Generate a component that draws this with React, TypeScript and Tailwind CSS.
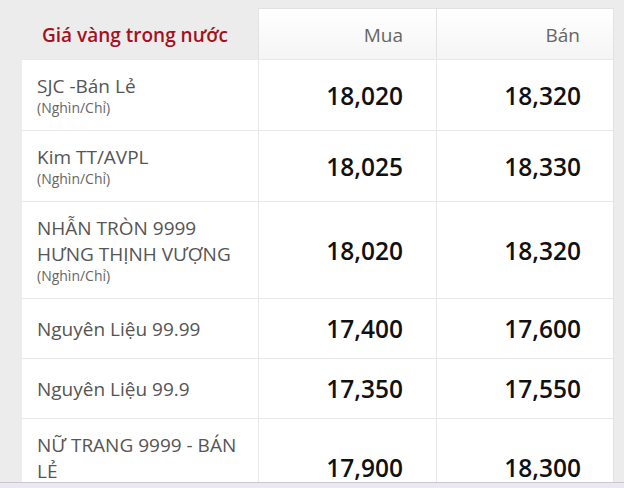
import React from "react";

type Row = { name: string[]; sub?: boolean; buy: string; sell: string };

const rows: Row[] = [
  { name: ["SJC -Bán Lẻ"], sub: true, buy: "18,020", sell: "18,320" },
  { name: ["Kim TT/AVPL"], sub: true, buy: "18,025", sell: "18,330" },
  { name: ["NHẪN TRÒN 9999", "HƯNG THỊNH VƯỢNG"], sub: true, buy: "18,020", sell: "18,320" },
  { name: ["Nguyên Liệu 99.99"], buy: "17,400", sell: "17,600" },
  { name: ["Nguyên Liệu 99.9"], buy: "17,350", sell: "17,550" },
  { name: ["NỮ TRANG 9999 - BÁN", "LẺ"], sub: true, buy: "17,900", sell: "18,300" },
];

export default function App() {
  return (
    <div
      className="relative w-[624px] h-[488px] overflow-hidden bg-[#ececec]"
      style={{ fontFamily: '"Open Sans", "Noto Sans", sans-serif' }}
    >
      <div className="ml-[22px] pt-[8px] w-[592px]">
        {/* header */}
        <div className="grid grid-cols-[236px_178px_178px] h-[51px]">
          <div className="flex items-center pl-[20px] pt-[3px] text-[19px] font-semibold text-[#a3111f]">
            Giá vàng trong nước
          </div>
          <div className="flex items-center justify-end pr-[33px] pt-[3px] text-[19px] text-[#666] bg-gradient-to-b from-white to-[#f5f5f5] border-t border-l border-[#e2e2e2]">
            Mua
          </div>
          <div className="flex items-center justify-end pr-[33px] pt-[3px] text-[19px] text-[#666] bg-gradient-to-b from-white to-[#f5f5f5] border-t border-l border-r border-[#e2e2e2]">
            Bán
          </div>
        </div>
        {/* body */}
        <div className="bg-white border-r border-[#e2e2e2]">
          {rows.map((r, i) => (
            <div
              key={i}
              className="grid grid-cols-[236px_178px_177px] border-t border-[#e8e8e8]"
            >
              <div className="flex flex-col justify-center pl-[15px] py-[13px] text-[#555]">
                {r.name.map((n, j) => (
                  <div key={j} className="text-[19px] leading-[26px]">
                    {n}
                  </div>
                ))}
                {r.sub && (
                  <div className="text-[14px] leading-[18px] text-[#666]">(Nghìn/Chỉ)</div>
                )}
              </div>
              <div className="flex items-center justify-end pr-[33px] py-[13px] border-l border-[#e8e8e8] text-[24.5px] leading-[33px] font-semibold text-[#111]">
                {r.buy}
              </div>
              <div className="flex items-center justify-end pr-[32px] py-[13px] border-l border-[#e8e8e8] text-[24.5px] leading-[33px] font-semibold text-[#111]">
                {r.sell}
              </div>
            </div>
          ))}
        </div>
      </div>
      <div className="absolute left-0 right-0 bottom-0 h-[6px] bg-[#ebe8f2] border-t border-[#c9c7d0]" />
    </div>
  );
}
